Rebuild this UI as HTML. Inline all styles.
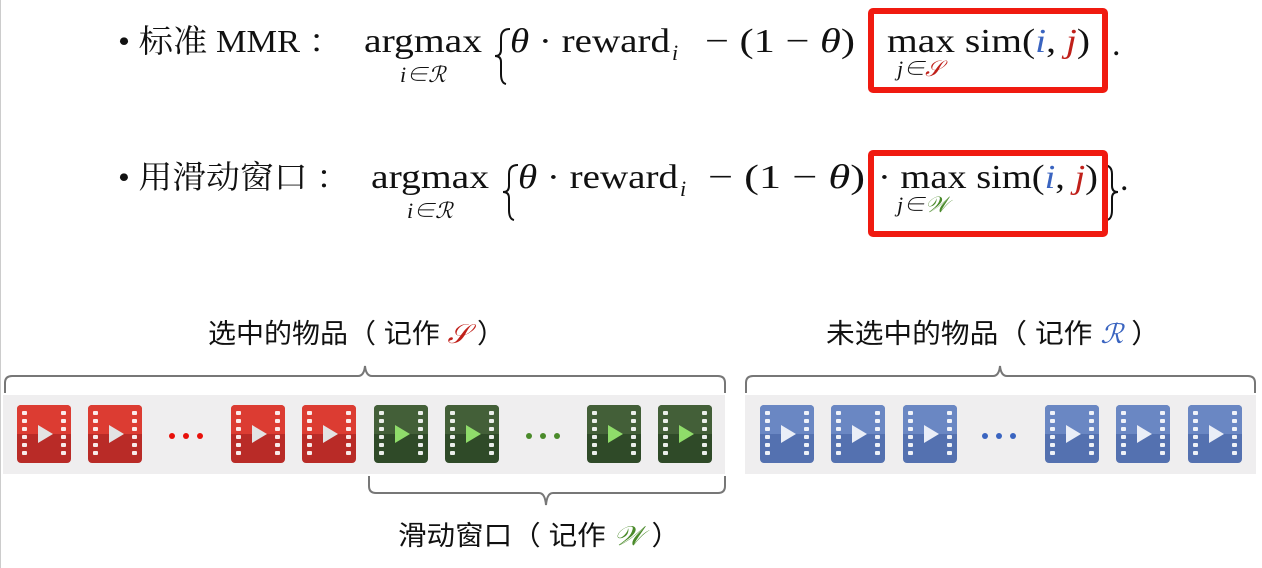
<!DOCTYPE html>
<html><head><meta charset="utf-8"><style>
html,body{margin:0;padding:0;background:#fff;width:1262px;height:568px;overflow:hidden}
svg{display:block}
.s{font-family:"Liberation Serif","Noto Serif CJK SC",serif;fill:#111}
.c{font-family:"Liberation Sans","Noto Sans CJK SC",sans-serif;fill:#111}
</style></head><body>
<svg width="1262" height="568" viewBox="0 0 1262 568" xmlns="http://www.w3.org/2000/svg">
<defs>
<g id="holes" fill="#fff" opacity="0.9">
<rect x="5" y="6" width="5" height="4" rx="1"/><rect x="5" y="14" width="5" height="4" rx="1"/><rect x="5" y="22" width="5" height="4" rx="1"/><rect x="5" y="30" width="5" height="4" rx="1"/><rect x="5" y="38" width="5" height="4" rx="1"/><rect x="5" y="46" width="5" height="4" rx="1"/>
<rect x="44" y="6" width="5" height="4" rx="1"/><rect x="44" y="14" width="5" height="4" rx="1"/><rect x="44" y="22" width="5" height="4" rx="1"/><rect x="44" y="30" width="5" height="4" rx="1"/><rect x="44" y="38" width="5" height="4" rx="1"/><rect x="44" y="46" width="5" height="4" rx="1"/>
</g>
<g id="red"><rect width="54" height="58" rx="4" fill="#b92b27"/><path d="M4 0h46a4 4 0 0 1 4 4v25H0V4a4 4 0 0 1 4-4z" fill="#dc3c32"/><use href="#holes"/><path d="M21 20L36 29L21 38Z" fill="#e3e3e3"/></g>
<g id="green"><rect width="54" height="58" rx="4" fill="#2f4a28"/><path d="M4 0h46a4 4 0 0 1 4 4v25H0V4a4 4 0 0 1 4-4z" fill="#435f38"/><use href="#holes"/><path d="M21 20L36 29L21 38Z" fill="#8fdc6a"/></g>
<g id="blue"><rect width="54" height="58" rx="4" fill="#5471b0"/><path d="M4 0h46a4 4 0 0 1 4 4v25H0V4a4 4 0 0 1 4-4z" fill="#6a87c3"/><use href="#holes"/><path d="M21 20L36 29L21 38Z" fill="#eaeef7"/></g>
</defs>
<line x1="0.5" y1="0" x2="0.5" y2="568" stroke="#ccc"/>
<!-- line 1 -->
<text class="s" x="118" y="52" font-size="32" textLength="225" lengthAdjust="spacingAndGlyphs">• 标准 MMR ：</text>
<text class="s" x="364" y="52" font-size="34" textLength="118" lengthAdjust="spacingAndGlyphs">argmax</text>
<text class="s" x="400" y="82" font-size="22" font-style="italic" fill="#3a64c0">i∈ℛ</text>
<path d="M510 29 Q501 29 501 38 V50 Q501 56 495 56 Q501 56 501 62 V74 Q501 83 506 84" fill="none" stroke="#111" stroke-width="2"/>
<text class="s" x="510" y="52" font-size="34" textLength="160" lengthAdjust="spacingAndGlyphs"><tspan font-style="italic">θ</tspan> · reward</text>
<text class="s" x="672" y="60" font-size="22" font-style="italic" fill="#3a64c0">i</text>
<text class="s" x="705" y="52" font-size="34" textLength="150" lengthAdjust="spacingAndGlyphs">−  (1 − <tspan font-style="italic">θ</tspan>)</text>
<text class="s" x="887" y="52" font-size="34" textLength="203" lengthAdjust="spacingAndGlyphs">max  sim(<tspan font-style="italic" fill="#3a64c0">i</tspan>, <tspan font-style="italic" fill="#c0201a">j</tspan>)</text>
<text class="s" x="897" y="76" font-size="22" font-style="italic" fill="#c0201a">j∈<tspan fill="#c0201a">𝒮</tspan></text>
<text class="s" x="1112" y="55" font-size="34">.</text>
<rect x="871" y="11" width="234" height="79" fill="none" stroke="#f01a10" stroke-width="6" rx="2"/>
<!-- line 2 -->
<text class="s" x="118" y="188" font-size="32" textLength="232" lengthAdjust="spacingAndGlyphs">• 用滑动窗口 ：</text>
<text class="s" x="371" y="188" font-size="34" textLength="118" lengthAdjust="spacingAndGlyphs">argmax</text>
<text class="s" x="407" y="218" font-size="22" font-style="italic" fill="#3a64c0">i∈ℛ</text>
<path d="M518 165 Q509 165 509 174 V186 Q509 192 503 192 Q509 192 509 198 V210 Q509 219 514 220" fill="none" stroke="#111" stroke-width="2"/>
<text class="s" x="518" y="188" font-size="34" textLength="160" lengthAdjust="spacingAndGlyphs"><tspan font-style="italic">θ</tspan> · reward</text>
<text class="s" x="680" y="196" font-size="22" font-style="italic" fill="#3a64c0">i</text>
<text class="s" x="708" y="188" font-size="34" textLength="157" lengthAdjust="spacingAndGlyphs">−  (1 − <tspan font-style="italic">θ</tspan>)</text>
<text class="s" x="878" y="188" font-size="34" textLength="220" lengthAdjust="spacingAndGlyphs">· max  sim(<tspan font-style="italic" fill="#3a64c0">i</tspan>, <tspan font-style="italic" fill="#c0201a">j</tspan>)</text>
<text class="s" x="897" y="212" font-size="22" font-style="italic" fill="#c0201a">j∈<tspan fill="#4a8a2a">𝒲</tspan></text>
<path d="M1103 165 Q1112 165 1112 174 V186 Q1112 192 1118 192 Q1112 192 1112 198 V210 Q1112 219 1107 220" fill="none" stroke="#111" stroke-width="2"/>
<text class="s" x="1120" y="190" font-size="34">.</text>
<rect x="871" y="153" width="234" height="81" fill="none" stroke="#f01a10" stroke-width="6" rx="2"/>
<!-- labels -->
<text class="c" x="208" y="343" font-size="27" textLength="297" lengthAdjust="spacingAndGlyphs">选中的物品（ 记作 <tspan fill="#c0201a" font-style="italic">𝒮</tspan> ）</text>
<text class="c" x="826" y="343" font-size="27" textLength="334" lengthAdjust="spacingAndGlyphs">未选中的物品（ 记作 <tspan fill="#3a64c0" font-style="italic">ℛ</tspan> ）</text>
<text class="c" x="398" y="545" font-size="27" textLength="282" lengthAdjust="spacingAndGlyphs">滑动窗口（ 记作 <tspan fill="#4a8a2a" font-style="italic">𝒲</tspan> ）</text>
<!-- braces -->
<path d="M5 393 V383 Q5 376 12 376 H358 Q364 376 365 366 Q366 376 372 376 H718 Q725 376 725 383 V393" fill="none" stroke="#777" stroke-width="2"/>
<path d="M746 393 V383 Q746 376 753 376 H993 Q999 376 1000 366 Q1001 376 1007 376 H1248 Q1255 376 1255 383 V393" fill="none" stroke="#777" stroke-width="2"/>
<path d="M369 476 V486 Q369 493 376 493 H539 Q545 493 546 505 Q547 493 553 493 H718 Q725 493 725 486 V476" fill="none" stroke="#777" stroke-width="2"/>
<!-- bands -->
<rect x="3" y="395" width="722" height="79" fill="#efeeef"/>
<rect x="745" y="395" width="511" height="79" fill="#efeeef"/>
<use href="#red" x="17" y="405"/><use href="#red" x="88" y="405"/>
<g fill="#e8100a"><circle cx="172" cy="436" r="3"/><circle cx="186" cy="436" r="3"/><circle cx="200" cy="436" r="3"/></g>
<use href="#red" x="231" y="405"/><use href="#red" x="302" y="405"/>
<use href="#green" x="374" y="405"/><use href="#green" x="445" y="405"/>
<g fill="#4a8a2a"><circle cx="529" cy="436" r="3"/><circle cx="543" cy="436" r="3"/><circle cx="557" cy="436" r="3"/></g>
<use href="#green" x="587" y="405"/><use href="#green" x="658" y="405"/>
<use href="#blue" x="760" y="405"/><use href="#blue" x="831" y="405"/><use href="#blue" x="903" y="405"/>
<g fill="#3a64c0"><circle cx="985" cy="436" r="3"/><circle cx="999" cy="436" r="3"/><circle cx="1013" cy="436" r="3"/></g>
<use href="#blue" x="1045" y="405"/><use href="#blue" x="1116" y="405"/><use href="#blue" x="1188" y="405"/>
</svg>
</body></html>
